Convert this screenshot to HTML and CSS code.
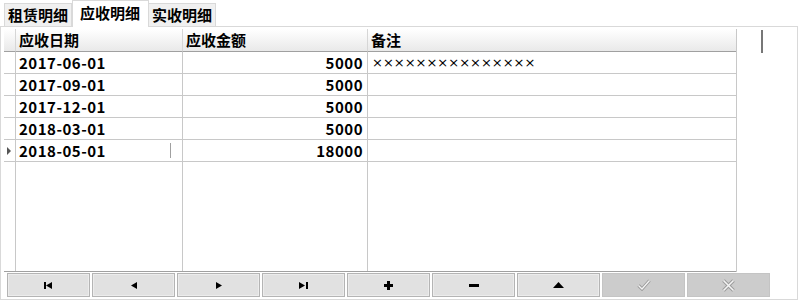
FILE: index.html
```html
<!DOCTYPE html>
<html lang="zh-CN">
  <head>
    <meta charset="UTF-8" />
    <title>应收明细</title>
    <link rel="stylesheet" href="styles.css">
  </head>
  <body>
    <div class="tabs">
      <div class="tab">租赁明细</div>
      <div class="tab active">应收明细</div>
      <div class="tab">实收明细</div>
    </div>
    <div class="panel">
      <div class="grid-area">
        <div class="grid">
          <div class="ind head"></div>
          <div class="cell head">应收日期</div>
          <div class="cell head">应收金额</div>
          <div class="cell head">备注</div>

          <div class="ind"></div>
          <div class="cell num">2017-06-01</div>
          <div class="cell num right">5000</div>
          <div class="cell note">×××××××××××××××</div>

          <div class="ind"></div>
          <div class="cell num">2017-09-01</div>
          <div class="cell num right">5000</div>
          <div class="cell note"></div>

          <div class="ind"></div>
          <div class="cell num">2017-12-01</div>
          <div class="cell num right">5000</div>
          <div class="cell note"></div>

          <div class="ind"></div>
          <div class="cell num">2018-03-01</div>
          <div class="cell num right">5000</div>
          <div class="cell note"></div>

          <div class="ind current"><span class="arrow"></span></div>
          <div class="cell num editing">2018-05-01<span class="caret"></span></div>
          <div class="cell num right">18000</div>
          <div class="cell note"></div>

          <div class="ind filler"></div>
          <div class="cell filler"></div>
          <div class="cell filler"></div>
          <div class="cell filler"></div>
        </div>
        <div class="grid-side">
          <div class="side-head"></div>
        </div>
      </div>
      <div class="navigator">
        <button class="nav-btn"><svg width="9" height="7" viewBox="0 0 9 7"><rect x="0" y="0" width="2" height="7"/><polygon points="2,3.5 8,0 8,7"/></svg></button>
        <button class="nav-btn"><svg width="6" height="7" viewBox="0 0 6 7"><polygon points="0,3.5 6,0 6,7"/></svg></button>
        <button class="nav-btn"><svg width="6" height="7" viewBox="0 0 6 7"><polygon points="6,3.5 0,0 0,7"/></svg></button>
        <button class="nav-btn"><svg width="9" height="7" viewBox="0 0 9 7"><polygon points="6,3.5 0,0 0,7"/><rect x="7" y="0" width="2" height="7"/></svg></button>
        <button class="nav-btn"><svg width="9" height="9" viewBox="0 0 9 9"><rect x="3" y="0" width="3" height="9"/><rect x="0" y="3" width="9" height="3"/></svg></button>
        <button class="nav-btn"><svg width="10" height="3" viewBox="0 0 10 3"><rect x="0" y="0" width="10" height="3"/></svg></button>
        <button class="nav-btn"><svg width="11" height="6" viewBox="0 0 11 6"><polygon points="5.5,0 11,6 0,6"/></svg></button>
        <button class="nav-btn disabled"><svg width="14" height="12" viewBox="0 0 14 12"><path d="M1.5 6.5 L5 10 L12.5 1.5" fill="none" stroke="#9c9c9c" stroke-width="3.2"/><path d="M1.5 6.5 L5 10 L12.5 1.5" fill="none" stroke="#f4f4f4" stroke-width="1.3"/></svg></button>
        <button class="nav-btn disabled"><svg width="13" height="13" viewBox="0 0 13 13"><path d="M1.5 1.5 L11.5 11.5 M11.5 1.5 L1.5 11.5" fill="none" stroke="#9c9c9c" stroke-width="3.6"/><path d="M1.5 1.5 L11.5 11.5 M11.5 1.5 L1.5 11.5" fill="none" stroke="#f4f4f4" stroke-width="1.5"/></svg></button>
      </div>
    </div>
  </body>
</html>
```

FILE: styles.css
```css
* {
  margin: 0;
  padding: 0;
  box-sizing: border-box;
}
html, body {
  width: 800px;
  height: 300px;
  background: #fff;
  color: #000;
  font-family: "Noto Sans CJK SC", "Noto Sans", sans-serif;
  overflow: hidden;
}
.tabs {
  display: flex;
  align-items: flex-end;
  height: 26px;
  padding-left: 4px;
  position: relative;
  z-index: 1;
}
.tab {
  height: 23px;
  padding: 0 3px;
  border: 1px solid #d9d9d9;
  border-bottom: none;
  background: #f0f0f0;
  font-size: 15px;
  font-weight: bold;
  line-height: 21px;
  white-space: nowrap;
}
.tab.active {
  height: 27px;
  margin-bottom: -1px;
  margin-right: -1px;
  padding: 0 8px 0 7px;
  background: #fff;
  line-height: 24px;
  position: relative;
  z-index: 2;
}
.panel {
  height: 274px;
  width: 798px;
  border: 1px solid #d9d9d9;
  padding: 2px 3px 0 3px;
}
.grid-area {
  display: flex;
  height: 243px;
}
.grid {
  display: grid;
  grid-template-columns: 12px 167px 185px 369px;
  grid-template-rows: 23px repeat(5, 22px) 1fr;
  width: 733px;
  height: 243px;
  border-bottom: 1px solid #a0a0a0;
}
.ind, .cell {
  border-right: 1px solid #c8c8c8;
  border-bottom: 1px solid #c8c8c8;
  background: #fff;
}
.head {
  background: linear-gradient(#ffffff, #e9e9e9);
  border-bottom: 1px solid #a0a0a0;
  border-right: 1px solid #d6d6d6;
  font-size: 15px;
  font-weight: bold;
  line-height: 21px;
  padding: 0 2px;
}
.cell {
  padding: 0 3px;
  white-space: nowrap;
  overflow: hidden;
}
.num {
  font-size: 15px;
  font-weight: bold;
  line-height: 21px;
  letter-spacing: 0.5px;
}
.right {
  text-align: right;
  padding-right: 4px;
}
.note {
  padding-left: 4px;
  font-family: "DejaVu Sans", sans-serif;
  font-size: 13px;
  line-height: 21px;
}
.filler {
  border-bottom: none;
}
.ind.current {
  display: flex;
  align-items: center;
  justify-content: center;
}
.arrow {
  width: 0;
  height: 0;
  margin-left: -2px;
  border-top: 4px solid transparent;
  border-bottom: 4px solid transparent;
  border-left: 4px solid #555;
}
.editing {
  position: relative;
}
.caret {
  position: absolute;
  left: 154px;
  top: 3px;
  width: 1px;
  height: 15px;
  background: #a0a0a0;
}
.grid-side {
  flex: 1;
  border-left: 1px solid #c8c8c8;
  margin-left: -1px;
}
.side-head {
  width: 26px;
  height: 23px;
  margin-top: 1px;
  border-right: 2px solid #777;
}
.navigator {
  display: flex;
  gap: 2px;
  margin: 1px 0 0 3px;
}
.nav-btn {
  width: 83px;
  height: 24px;
  display: flex;
  align-items: center;
  justify-content: center;
  background: #e1e1e1;
  border: 1px solid #b4b4b4;
  box-shadow: inset 0 0 0 1px #ececec;
}
.nav-btn svg {
  fill: #000;
}
.nav-btn.disabled {
  background: #cccccc;
  border-color: #c4c4c4;
  box-shadow: none;
}
```
